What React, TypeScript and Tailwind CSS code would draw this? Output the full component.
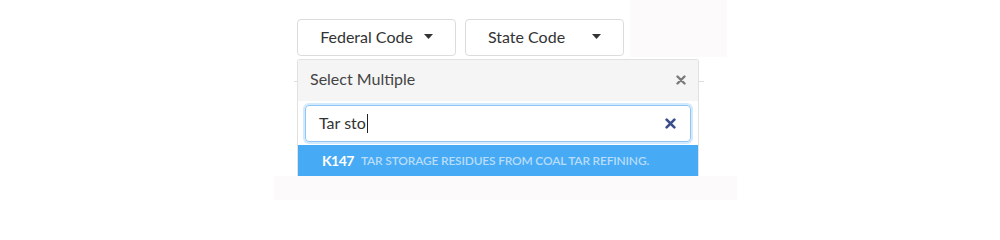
import React from "react";

const font = { fontFamily: "Lato, 'Open Sans', sans-serif" };

function Caret() {
  return (
    <svg width="9" height="5" viewBox="0 0 9 5" className="shrink-0">
      <path d="M0 0h9L4.5 5z" fill="#333" />
    </svg>
  );
}

function CodeButton({ label, gap }: { label: string; gap: string }) {
  return (
    <button className="flex h-[37px] w-[159px] items-center justify-center rounded-[4px] border border-[#dcdcdc] bg-white pb-[2px] text-[16px] text-[#333]">
      <span>{label}</span>
      <span className={gap}>
        <Caret />
      </span>
    </button>
  );
}

function CloseIcon({ color, size }: { color: string; size: number }) {
  return (
    <svg width={size} height={size} viewBox="0 0 10 10">
      <path d="M1.5 1.5l7 7M8.5 1.5l-7 7" stroke={color} strokeWidth="2.4" strokeLinecap="round" />
    </svg>
  );
}

export default function App() {
  return (
    <div className="h-[200px] w-[1000px] overflow-hidden bg-white" style={font}>
      <div className="ml-[274px] flex w-[463px] flex-col">
        <div className="flex h-[57px] items-start">
          <div className="ml-[23px] mt-[19px] flex gap-[9px]">
            <CodeButton label="Federal Code" gap="ml-[11px]" />
            <CodeButton label="State Code" gap="ml-[27px]" />
          </div>
          <div className="ml-[6px] h-[57px] w-[97px] bg-[#fcfafb]" />
        </div>

        <div className="relative ml-[23px] mt-[2px] w-[402px]">
          <div className="absolute left-[-3px] right-[-5px] top-[22px] h-px bg-[#dddddd]" />
          <div className="relative rounded-t-[3px] border-x border-t border-[#e1e1e1] bg-white">
            <div className="flex h-[41px] items-center justify-between bg-[#f5f5f5] pb-[3px] pl-[12px] pr-[12px] text-[16px] text-[#444]">
              <span>Select Multiple</span>
              <span className="pt-[2px]">
                <CloseIcon color="#7a7a7a" size={10} />
              </span>
            </div>
            <div className="px-[7px] pt-[4px] pb-[3px]">
              <div className="flex h-[37px] items-center justify-between rounded-[4px] border border-[#8fc6f6] pb-px pl-[13px] pr-[14px] text-[16px] text-[#333] shadow-[0_0_0_2px_#d3eafc]">
                <span className="flex items-center">
                  Tar sto
                  <span className="ml-px h-[19px] w-px bg-[#222]" />
                </span>
                <CloseIcon color="#3b4d8c" size={11} />
              </div>
            </div>
            <div className="flex h-[31px] items-center bg-[#47aaf5] pl-[24px]">
              <span className="text-[14px] font-bold tracking-[-0.5px] text-white">K147</span>
              <span className="ml-[7px] text-[12px] font-semibold uppercase tracking-[-0.2px] text-[#b7ddfb]">
                Tar storage residues from coal tar refining.
              </span>
            </div>
          </div>
        </div>

        <div className="h-[24px] w-[463px] bg-[#fcfafb]" />
      </div>
    </div>
  );
}
